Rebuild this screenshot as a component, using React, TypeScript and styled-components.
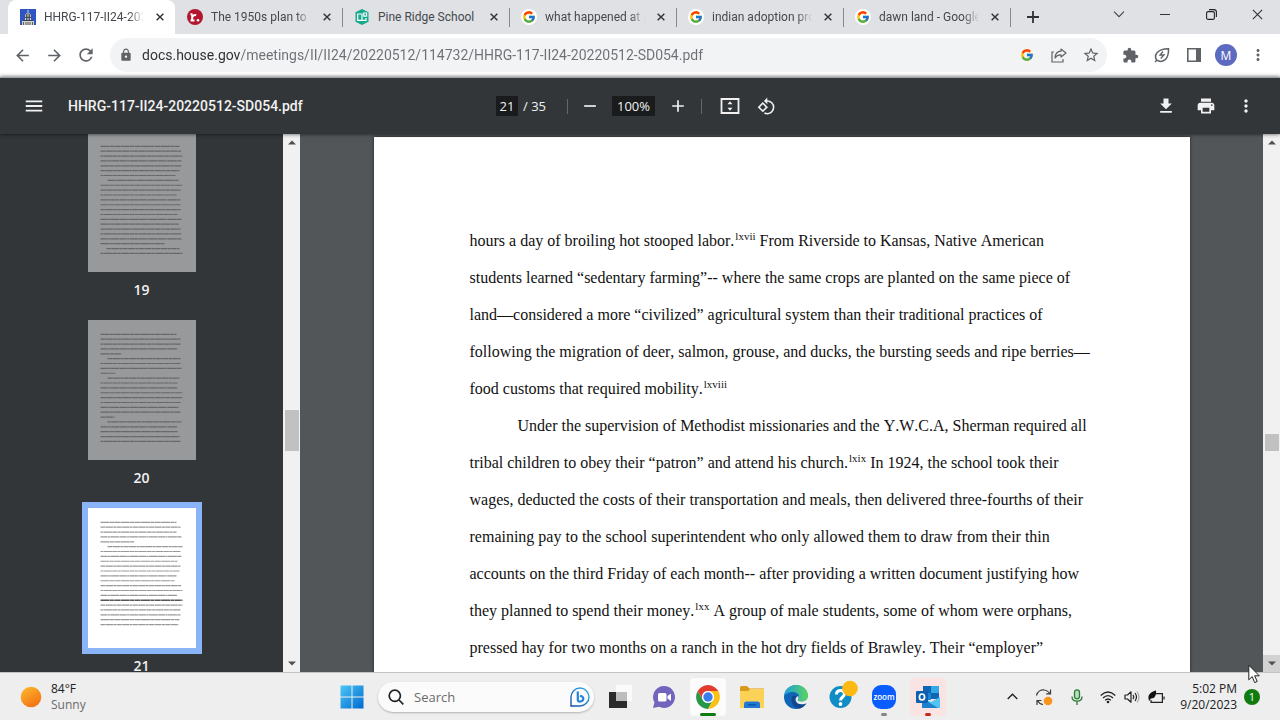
import React from "react";
import styled, { createGlobalStyle } from "styled-components";
import {
  MdAdd,
  MdArrowBack,
  MdArrowForward,
  MdExtension,
  MdFileDownload,
  MdLock,
  MdMenu,
  MdMoreVert,
  MdPrint,
  MdRefresh,
  MdRemove,
  MdRotate90DegreesCcw,
  MdStarBorder,
} from "react-icons/md";
import { FcGoogle } from "react-icons/fc";

const uiFont = `"Segoe UI", "Open Sans", "Noto Sans", sans-serif`;
const chromeFont = `"Segoe UI", Roboto, sans-serif`;

const GlobalStyle = createGlobalStyle`
  *, *::before, *::after { box-sizing: border-box; }
  body { margin: 0; font-family: ${uiFont}; font-size: 12px; color: #202124; }
  button, input { font: inherit; color: inherit; border: 0; margin: 0; padding: 0; background: none; }
  button { display: inline-flex; align-items: center; justify-content: center; cursor: pointer; }
  svg { display: block; flex: none; }
`;

const Desktop = styled.div`
  position: relative;
  display: flex;
  flex-direction: column;
  height: 100vh;
  overflow: hidden;
`;

/* ---------- Tab strip ---------- */

const TabStrip = styled.header`
  display: flex;
  align-items: stretch;
  height: 34px;
  padding-left: 8px;
  background: #dfe1e5;
`;

const Tab = styled.div<{ $active?: boolean; $divider?: boolean }>`
  position: relative;
  display: flex;
  align-items: center;
  gap: 8px;
  width: 167px;
  padding: 0 7px 0 12px;
  border-radius: 8px 8px 0 0;
  background: ${(p) => (p.$active ? "#fff" : "transparent")};
  color: #45494d;
  &::after {
    content: "";
    position: absolute;
    right: -1px;
    top: 8px;
    width: 1px;
    height: 19px;
    background: ${(p) => (p.$divider ? "#85888c" : "transparent")};
  }
`;

const TabTitle = styled.span<{ $fade?: boolean }>`
  flex: 1;
  min-width: 0;
  white-space: nowrap;
  font-family: ${chromeFont};
  line-height: 18px;
  mask-image: ${(p) => (p.$fade ? "linear-gradient(to right, #000 85%, transparent)" : "none")};
`;

const TabClose = styled.button`
  width: 16px;
  height: 16px;
`;

const FaviconDisc = styled.span`
  display: flex;
  align-items: center;
  justify-content: center;
  width: 16px;
  height: 16px;
  border-radius: 50%;
  background: #fff;
`;

const NewTab = styled.button`
  width: 28px;
  margin-left: 9px;
`;

const WindowControls = styled.div`
  display: flex;
  height: 28px;
  margin-left: auto;
`;

const WindowButton = styled.button`
  width: 46px;
`;

/* ---------- Address row ---------- */

const AddressRow = styled.nav`
  display: flex;
  align-items: center;
  height: 43px;
  padding: 0 6px 1px;
  background: #fff;
  color: #5f6368;
`;

const IconButton = styled.button<{ $width?: number }>`
  width: ${(p) => p.$width ?? 32}px;
  height: 32px;
`;

const Omnibox = styled.div`
  display: flex;
  flex: 1;
  align-items: center;
  height: 34px;
  margin: 0 7px 0 8px;
  padding-left: 9px;
  border-radius: 17px;
  background: #f1f3f4;
`;

const UrlInput = styled.input`
  flex: 1;
  min-width: 0;
  margin-left: 9px;
  font-family: ${chromeFont};
  font-size: 14px;
  line-height: 24px;
  outline: 0;
  color: transparent;
  background: linear-gradient(to right, #2b2e32 98px, #6c7075 98px);
  background-clip: text;
`;

const Avatar = styled.span`
  display: flex;
  align-items: center;
  justify-content: center;
  width: 22px;
  height: 22px;
  border-radius: 50%;
  background: #5c6bc0;
  color: #fff;
`;

/* ---------- PDF toolbar ---------- */

const PdfToolbar = styled.div`
  position: relative;
  z-index: 1;
  display: grid;
  grid-template-columns: 1fr auto 1fr;
  align-items: center;
  height: 57px;
  padding: 0 14px;
  border-top: 1px solid #9fa1a3;
  background: #323639;
  box-shadow: 0 0 4px rgba(0, 0, 0, 0.7);
  color: #f1f1f1;
`;

const ToolbarGroup = styled.div<{ $end?: boolean }>`
  display: flex;
  align-items: center;
  justify-content: ${(p) => (p.$end ? "flex-end" : "flex-start")};
`;

const FileName = styled.h1`
  margin: 0 0 0 14px;
  font-family: ${chromeFont};
  font-size: 14px;
  font-weight: 500;
  line-height: 20px;
  white-space: nowrap;
`;

const DarkField = styled.input<{ $width: number }>`
  width: ${(p) => p.$width}px;
  height: 20px;
  background: #191b1c;
  font-size: 13px;
  text-align: center;
  outline: 0;
`;

const PageTotal = styled.span`
  width: 49px;
  padding-left: 5px;
  font-size: 13px;
  line-height: 20px;
  white-space: nowrap;
`;

const Divider = styled.span<{ $gap?: number }>`
  width: 1px;
  height: 15px;
  margin-right: ${(p) => p.$gap ?? 0}px;
  background: #63676a;
`;

/* ---------- PDF body ---------- */

const PdfBody = styled.main`
  display: flex;
  flex: 1;
  min-height: 0;
  background: #525659;
`;

const Sidebar = styled.aside`
  display: flex;
  width: 300px;
  background: #323639;
`;

const ThumbList = styled.ol`
  display: flex;
  flex: 1;
  flex-direction: column;
  align-items: center;
  margin: -2px 0 0;
  padding: 0;
  overflow: hidden;
  list-style: none;
`;

const ThumbItem = styled.li`
  display: flex;
  flex: none;
  flex-direction: column;
  align-items: center;
  height: 188px;
  color: #f1f1f1;
  font-size: 14px;
  font-weight: 600;
  line-height: 20px;
`;

const ThumbPage = styled.button<{ $current?: boolean }>`
  width: 108px;
  height: 140px;
  margin-bottom: 8px;
  background: ${(p) => (p.$current ? "#fff" : "#98999b")};
  box-shadow: ${(p) => (p.$current ? "0 0 0 6px #8ab4f8" : "none")};
`;

const Scrollbar = styled.div<{ $before: number; $thumb: number; $after: number }>`
  display: grid;
  grid-template-rows: 17px ${(p) => `${p.$before}fr ${p.$thumb}px ${p.$after}fr`} 17px;
  width: 17px;
  background: #f1f1f1;
`;

const ScrollArrow = styled.button<{ $row: number; $hover?: boolean }>`
  grid-row: ${(p) => p.$row};
  background: ${(p) => (p.$hover ? "#d2d2d2" : "transparent")};
`;

const ScrollThumb = styled.div`
  grid-row: 3;
  margin: 0 1px 0 2px;
  background: #c1c1c1;
`;

const Viewer = styled.section`
  display: flex;
  flex: 1;
  justify-content: center;
  min-width: 0;
  padding-top: 3px;
  overflow: hidden;
`;

const Page = styled.article`
  flex: none;
  width: 816px;
  padding: 85px 96px 0;
  background: #fff;
  box-shadow: 0 0 3px rgba(0, 0, 0, 0.6);
  color: #111;
  font-family: "Times New Roman", "Liberation Serif", serif;
  font-size: 16px;
  font-kerning: none;
  line-height: 37px;
`;

const Paragraph = styled.p<{ $indent?: boolean }>`
  margin: 0;
  text-indent: ${(p) => (p.$indent ? 48 : 0)}px;
  white-space: nowrap;
`;

const NoteRef = styled.sup`
  padding-left: 1px;
  font-size: 11px;
  line-height: 0;
`;

/* ---------- Taskbar ---------- */

const Taskbar = styled.footer`
  display: grid;
  grid-template-columns: 1fr auto 1fr;
  align-items: center;
  height: 48px;
  padding: 0 20px;
  border-top: 1px solid #c3c4c5;
  background: #eee;
`;

const Weather = styled.button`
  justify-self: start;
  gap: 9px;
  text-align: left;
  line-height: 16px;
`;

const Muted = styled.span`
  display: block;
  color: #6b6b6b;
`;

const Apps = styled.div`
  display: flex;
  align-items: center;
`;

const AppButton = styled.button<{ $bg?: string; $mark?: string; $markWidth?: number }>`
  position: relative;
  width: 36px;
  height: 38px;
  margin: 0 4px;
  border-radius: 4px;
  background: ${(p) => p.$bg ?? "transparent"};
  &::after {
    content: "";
    position: absolute;
    bottom: 0;
    left: 50%;
    width: ${(p) => p.$markWidth ?? 6}px;
    height: 3px;
    border-radius: 2px;
    background: ${(p) => p.$mark ?? "transparent"};
    transform: translateX(-50%);
  }
`;

const SearchBox = styled.label`
  display: flex;
  align-items: center;
  gap: 10px;
  width: 216px;
  height: 30px;
  margin: 0 4px;
  padding: 0 4px 0 10px;
  border-radius: 15px;
  background: #fbfbfb;
  box-shadow: 0 1px 2px rgba(0, 0, 0, 0.25);
`;

const SearchInput = styled.input`
  flex: 1;
  min-width: 0;
  font-size: 13px;
  outline: 0;
  &::placeholder { color: #6a6a6a; opacity: 1; }
`;

const ZoomTile = styled.span`
  display: flex;
  align-items: center;
  justify-content: center;
  width: 24px;
  height: 24px;
  border-radius: 9px;
  background: #0b5cff;
  color: #fff;
  font-size: 8px;
  font-weight: 600;
`;

const Tray = styled.div`
  display: flex;
  align-items: center;
  justify-content: flex-end;
`;

const TrayButton = styled.button<{ $width: number }>`
  width: ${(p) => p.$width}px;
  height: 32px;
`;

const Clock = styled.time`
  width: 67px;
  text-align: right;
  line-height: 16px;
`;

const Notifications = styled.button`
  width: 16px;
  height: 16px;
  margin-left: 7px;
  border-radius: 50%;
  background: #107c10;
  color: #fff;
  font-size: 11px;
`;

const Pointer = styled.svg`
  position: absolute;
  right: 20px;
  bottom: 36px;
`;

/* ---------- Icons ---------- */

const CrossIcon = ({ size = 8, width = 1.8 }: { size?: number; width?: number }) => (
  <svg width={size} height={size} viewBox="0 0 10 10" stroke="#303236" strokeWidth={width}>
    <path d="M.8.8l8.4 8.4M9.2.8L.8 9.2" />
  </svg>
);

const CapitolIcon = () => (
  <svg width="16" height="16" viewBox="0 0 16 16">
    <path fill="#2f55c4" d="M0 0h16v16H0z" />
    <path fill="#d9d6c6" d="M7.5 1h1v3h-1zM5 8q0-4 3-4t3 4zM5 8.6h6V11H5zM2 12h12v4H2z" />
    <path stroke="#353a48" strokeWidth=".8" d="M6.5 5v6M8 4v7M9.5 5v6M4.5 8.3h7M3 11.5h10M3.500 13v3M6 13v3M8 13v3M10 13v3M12.500 13v3" />
  </svg>
);

const RosterIcon = () => (
  <svg width="16" height="16" viewBox="0 0 16 16">
    <circle cx="8" cy="8" r="8" fill="#b3162f" />
    <path fill="none" stroke="#fff" strokeWidth="2" d="M5.200 12V5.500M3.500 5.300h2M3.500 11.500h4M5.500 8q1-2.600 3.700-1.800" />
    <circle cx="11" cy="11.300" r="1.300" fill="#fff" />
  </svg>
);

const SchoolIcon = () => (
  <svg width="16" height="16" viewBox="0 0 16 16">
    <path fill="#17a98c" d="M8 0l6.500 3.200v9.600L8 16l-6.500-3.200V3.200z" />
    <path fill="none" stroke="#fff" strokeWidth="1.200" d="M8 5H3.700v6.300H12V9M8 4.500v7M9.800 4h2.800v3.200H9.800z" />
  </svg>
);

const ShareIcon = () => (
  <svg width="16" height="16" viewBox="0 0 16 16" fill="none" stroke="#5f6368" strokeWidth="1.200">
    <path d="M3 5H1v10h11v-3" />
    <path strokeLinejoin="round" d="M10 2l5 4-5 4V7.800Q6 7.500 4 11q.3-6.400 6-6.800z" />
  </svg>
);

const LeafIcon = () => (
  <svg width="16" height="16" viewBox="0 0 16 16" fill="none" stroke="#5f6368" strokeWidth="1.500">
    <path d="M2.800 13.200C-.2 9 2 2 14.500 1.700 15 13 8 16.500 2.800 13.200zM1 15l2-2" />
    <path strokeWidth="1.300" d="M9 4.500L6 8h4l-3.300 3.500" />
  </svg>
);

const SidePanelIcon = () => (
  <svg width="14" height="14" viewBox="0 0 14 14">
    <path fill="none" stroke="#5f6368" strokeWidth="1.600" d="M.8.8h12.400v12.400H.8z" />
    <path fill="#5f6368" d="M9 0h5v14H9z" />
  </svg>
);

const FitPageIcon = () => (
  <svg width="20" height="16" viewBox="0 0 20 16">
    <path fill="none" stroke="#f1f1f1" strokeWidth="1.800" d="M1.500 1h17v14h-17z" />
    <path fill="#f1f1f1" d="M10 3.200l2.500 3h-5zM10 12.800l2.500-3h-5z" />
  </svg>
);

const ArrowIcon = ({ down }: { down?: boolean }) => (
  <svg width="8" height="5" viewBox="0 0 8 5">
    <path fill="#505050" d={down ? "M0 .5h8L4 4.500z" : "M0 4.500h8L4 .5z"} />
  </svg>
);

const WindowsIcon = () => (
  <svg width="24" height="24" viewBox="0 0 24 24">
    <defs>
      <linearGradient id="win" x1="0" y1="0" x2="1" y2="1">
        <stop offset="0" stopColor="#4cc6f7" />
        <stop offset="1" stopColor="#0069cf" />
      </linearGradient>
    </defs>
    <path fill="url(#win)" d="M1 .5h10.500V11.500H.5V1zM12.500.5h11v11h-11zM.5 12.500h11v11H.5zM12.500 12.500h11v11h-11z" />
  </svg>
);

const BingIcon = () => (
  <svg width="20" height="20" viewBox="0 0 20 20" fill="none">
    <defs>
      <linearGradient id="bing" x1="1" y1="0" x2="0" y2="1">
        <stop offset="0" stopColor="#31b5ea" />
        <stop offset="1" stopColor="#174ba8" />
      </linearGradient>
    </defs>
    <path stroke="url(#bing)" strokeWidth="1.400" d="M1 19v-9a9 9 0 1 1 9 9z" />
    <path stroke="#2484dc" strokeWidth="2.200" strokeLinejoin="round" d="M7.800 4.500v8.500q0 1.800 2.500 1.500 3-.5 3-3 0-2-3.300-2.800" />
  </svg>
);

const TaskViewIcon = () => (
  <svg width="24" height="24" viewBox="0 0 24 24">
    <path fill="#fafafa" d="M8 0h16v16H8z" />
    <path fill="#2b2b2b" d="M1 7h18v16H1z" />
    <path fill="#bdbdbd" d="M8 7h11v9H8z" />
  </svg>
);

const ChatIcon = () => (
  <svg width="24" height="24" viewBox="0 0 24 24">
    <path fill="#7264bd" d="M12 1a11 11 0 1 1-5 20.800L1 23l1.500-5.500A11 11 0 0 1 12 1z" />
    <rect x="6" y="8" width="8.500" height="8.500" rx="1.500" fill="#fff" />
    <path fill="#fff" d="M15.500 11l3.500-2.500v7.500l-3.500-2.500z" />
  </svg>
);

const ChromeIcon = () => (
  <svg width="26" height="26" viewBox="0 0 48 48">
    <path fill="#e33b2e" d="M4.950 13A22 22 0 0 1 43.050 13H24A11 11 0 0 0 14.470 29.500z" />
    <path fill="#279847" d="M4.950 13A22 22 0 0 0 24 46L33.530 29.500A11 11 0 0 1 14.470 29.500z" />
    <path fill="#fbc116" d="M43.050 13A22 22 0 0 1 24 46L33.530 29.500A11 11 0 0 0 24 13z" />
    <circle cx="24" cy="24" r="11" fill="#fff" />
    <circle cx="24" cy="24" r="8.700" fill="#3b7ded" />
  </svg>
);

const FolderIcon = () => (
  <svg width="26" height="24" viewBox="0 0 26 24">
    <path fill="#d99a1c" d="M1 2.500Q1 1 2.500 1H8l2.500 2.500H25V8H1z" />
    <path fill="#fbd158" d="M1 6h8l2.500-2H25v19H1z" />
    <path fill="#1f78d1" d="M5 23v-4q0-2.500 2.500-2.500h11Q21 16.500 21 19v4z" />
    <path stroke="#0e58a3" strokeWidth="1.500" d="M9 19.800h8" />
  </svg>
);

const EdgeIcon = () => (
  <svg width="26" height="26" viewBox="0 0 26 26">
    <defs>
      <linearGradient id="edgeTop" x1="0" y1="0.4" x2="1" y2="0.4">
        <stop offset="0" stopColor="#1e9fdc" />
        <stop offset="1" stopColor="#5bd45f" />
      </linearGradient>
    </defs>
    <circle cx="13" cy="13" r="12" fill="#1264b6" />
    <path fill="url(#edgeTop)" d="M1 13C1 6 6.500 1 13 1s12 5 12 10.500c0 4-3 6-6.500 6-3 0-4.200-1-3.700-2 1-1 1.200-1.500 1.200-3 0-3-3-4.500-6.500-4.500C5 8 1.500 10.500 1 13z" />
    <path fill="#12478f" d="M9 13c-2 5 1.500 11 7 11.500 3-.3 6-2.500 7.500-5.500-4 2-9.500 2-11-2.500-.5-2 .5-3.500 1.500-4-2-1.500-4.200-1-5 .5z" />
    <path fill="#eee" d="M15 12c-2 1-2.800 3-2.200 4.800 1.400 4 6.500 4.400 11.700 2.200l1.500-3.500-1-2.500c-1 3-3.500 4.500-6.500 4.500-3 0-4.200-1-3.700-2 .8-1 1.200-1.900.2-3.500z" />
  </svg>
);

const HelpIcon = () => (
  <svg width="36" height="36" viewBox="0 0 36 36">
    <circle cx="18.500" cy="18" r="11" fill="#118cc4" />
    <path fill="none" stroke="#fff" strokeWidth="3" d="M14.500 15.500q0-4 4-4t4 3.500c0 3-4 3-4 6.500" />
    <circle cx="18.500" cy="25" r="1.900" fill="#fff" />
    <circle cx="28" cy="9.500" r="7.800" fill="#fdb913" />
  </svg>
);

const OutlookIcon = () => (
  <svg width="24" height="24" viewBox="0 0 24 24">
    <path fill="#1066b5" d="M7 1h16v13H7z" />
    <path fill="#32a9e7" d="M15 1h8v7h-8z" />
    <path fill="#1b86d3" d="M7 8h8v7H7z" />
    <path fill="#50c5f2" d="M6 12l9 5 9-5v11H6z" />
    <path fill="#1c80d0" d="M6 13l16 10H6z" />
    <rect x="0" y="6" width="12" height="12" rx="1" fill="#0f5fae" />
    <ellipse cx="6" cy="12" rx="2.600" ry="3" fill="none" stroke="#fff" strokeWidth="1.700" />
  </svg>
);

const SyncIcon = () => (
  <svg width="18" height="18" viewBox="0 0 18 18" fill="none" stroke="#3a3a3a" strokeWidth="1.200">
    <path d="M1.500 7.500C2.500 3.500 6 1.500 9.500 2c2.500.3 4 1.500 5.500 3.500M15.500 1.500v4.300h-4.300M8 16.500c-2-.2-4-1.500-5.200-3.500M2 17v-4.500h4.500" />
    <circle cx="13" cy="13" r="4.300" fill="#f7941d" stroke="none" />
  </svg>
);

const MicIcon = () => (
  <svg width="12" height="16" viewBox="0 0 12 16" fill="none" stroke="#2b7a35" strokeWidth="1.300">
    <rect x="3.500" y=".8" width="5" height="9" rx="2.500" fill="#b9dcbd" />
    <path d="M1 7.500q0 4.700 5 4.700t5-4.700M6 12.200V16" />
  </svg>
);

const WifiIcon = () => (
  <svg width="16" height="14" viewBox="0 0 16 14" fill="none" stroke="#222" strokeWidth="1.300">
    <path d="M.7 5.500q7.300-7 14.600 0M3 8q5-4.800 10 0M5.200 10.300q2.800-2.600 5.600 0" />
    <circle cx="8" cy="12" r="1.300" fill="#222" stroke="none" />
  </svg>
);

const SpeakerIcon = () => (
  <svg width="16" height="14" viewBox="0 0 16 14" fill="none" stroke="#222" strokeWidth="1.200">
    <path strokeLinejoin="round" d="M1 5h2.500L7 1.800v10.400L3.500 9H1z" />
    <path d="M9 4.800q1.600 2.200 0 4.400M11 3q3 4 0 8" />
    <path stroke="#aaa" d="M13 1.500q4 5.500 0 11" />
  </svg>
);

const BatteryIcon = () => (
  <svg width="17" height="14" viewBox="0 0 17 14">
    <path fill="none" stroke="#222" strokeWidth="1.200" d="M8 3.600h6.400v8.800H3V10M16 6.500v3" />
    <path fill="#111" d="M.5 8.500C0 4 3 2 8 .5 8.500 5 7 8.500 3 8.500L1 11z" />
  </svg>
);

/* ---------- Page previews ---------- */

type Row = [indent: number, width: number, bold?: boolean];

const previewRows: Record<number, Row[]> = {
  19: [
    [0, 79], [0, 81], [0, 82], [0, 81], [0, 81], [0, 79], [0, 75], [7, 71], [0, 82], [0, 80], [0, 76], [0, 80],
    [0, 80], [0, 80], [0, 77], [0, 81], [0, 78], [0, 80], [0, 81], [0, 81], [0, 64], [6, 73], [0, 82],
  ],
  20: [
    [0, 76], [0, 80], [0, 80], [0, 77], [0, 21], [7, 73], [0, 80], [0, 81], [0, 15], [7, 72], [0, 77], [0, 77],
    [0, 82], [0, 82], [0, 80], [0, 78], [0, 80], [0, 14], [7, 74], [0, 77], [0, 77], [0, 79], [0, 80],
  ],
  21: [
    [0, 76], [0, 80], [0, 76], [0, 81], [0, 34], [7, 75], [0, 80], [0, 81], [0, 77], [0, 80], [0, 79], [0, 76],
    [0, 74], [0, 81], [0, 82], [0, 77], [0, 82, true], [0, 82], [0, 80], [0, 80], [0, 79], [0, 78],
  ],
};

const dashes = ["9 .4 4 .4 6 .4", "5 .4 7 .4 3 .4", "3 .4 8 .4 5 .4", "7 .4 2 .4 9 .4"];

const PagePreview = ({ page, current }: { page: number; current?: boolean }) => (
  <svg width="108" height="140" viewBox="0 0 108 140">
    {previewRows[page].map(([indent, width, bold], i) => (
      <line
        key={i}
        x1={12.5 + indent}
        x2={12.5 + indent + width}
        y1={14.3 + i * 4.87}
        y2={14.3 + i * 4.87}
        stroke={bold ? "#555" : current ? "#999" : "#666769"}
        strokeWidth={bold ? 1.4 : 1.2}
        strokeDasharray={dashes[i % dashes.length]}
      />
    ))}
  </svg>
);

/* ---------- Content ---------- */

const GoogleFavicon = () => (
  <FaviconDisc>
    <FcGoogle size={14} />
  </FaviconDisc>
);

const tabs = [
  { title: "HHRG-117-II24-202", icon: <CapitolIcon />, fade: true },
  { title: "The 1950s plan to e", icon: <RosterIcon />, fade: true },
  { title: "Pine Ridge School", icon: <SchoolIcon /> },
  { title: "what happened at p", icon: <GoogleFavicon />, fade: true },
  { title: "indian adoption pro", icon: <GoogleFavicon />, fade: true },
  { title: "dawn land - Google", icon: <GoogleFavicon />, fade: true },
];

const VerticalScroll = ({
  before,
  thumb,
  after,
  hoverDown,
}: {
  before: number;
  thumb: number;
  after: number;
  hoverDown?: boolean;
}) => (
  <Scrollbar $before={before} $thumb={thumb} $after={after}>
    <ScrollArrow $row={1} aria-label="Scroll up">
      <ArrowIcon />
    </ScrollArrow>
    <ScrollThumb />
    <ScrollArrow $row={5} $hover={hoverDown} aria-label="Scroll down">
      <ArrowIcon down />
    </ScrollArrow>
  </Scrollbar>
);

export default function App() {
  return (
    <Desktop>
      <GlobalStyle />

      <TabStrip>
        {tabs.map((tab, i) => (
          <Tab key={tab.title} $active={i === 0} $divider={i > 0}>
            {tab.icon}
            <TabTitle $fade={tab.fade}>{tab.title}</TabTitle>
            <TabClose aria-label="Close tab">
              <CrossIcon />
            </TabClose>
          </Tab>
        ))}
        <NewTab aria-label="New tab">
          <svg width="12" height="12" viewBox="0 0 12 12" stroke="#303236" strokeWidth="1.800">
            <path d="M6 0v12M0 6h12" />
          </svg>
        </NewTab>
        <WindowControls>
          <WindowButton aria-label="Search tabs">
            <svg width="12" height="7" viewBox="0 0 12 7" fill="none" stroke="#444" strokeWidth="1.100">
              <path d="M1 .7l5 5 5-5" />
            </svg>
          </WindowButton>
          <WindowButton aria-label="Minimize">
            <svg width="10" height="1" viewBox="0 0 10 1">
              <path fill="#333" d="M0 0h10v1H0z" />
            </svg>
          </WindowButton>
          <WindowButton aria-label="Restore">
            <svg width="11" height="11" viewBox="0 0 11 11" fill="none" stroke="#222" strokeWidth="1.100">
              <rect x=".6" y="2.600" width="7.800" height="7.800" rx="1.500" />
              <path d="M3 .6h5Q10.400.6 10.400 3v5" />
            </svg>
          </WindowButton>
          <WindowButton aria-label="Close">
            <CrossIcon size={11} width={1} />
          </WindowButton>
        </WindowControls>
      </TabStrip>

      <AddressRow>
        <IconButton aria-label="Back"><MdArrowBack size={19} /></IconButton>
        <IconButton aria-label="Forward"><MdArrowForward size={19} /></IconButton>
        <IconButton aria-label="Reload"><MdRefresh size={20} /></IconButton>
        <Omnibox>
          <MdLock size={14} />
          <UrlInput
            aria-label="Address"
            defaultValue="docs.house.gov/meetings/II/II24/20220512/114732/HHRG-117-II24-20220512-SD054.pdf"
          />
          <IconButton aria-label="Search with Google"><FcGoogle size={14} /></IconButton>
          <IconButton aria-label="Share"><ShareIcon /></IconButton>
          <IconButton aria-label="Bookmark"><MdStarBorder size={18} /></IconButton>
        </Omnibox>
        <IconButton aria-label="Extensions"><MdExtension size={17} /></IconButton>
        <IconButton aria-label="Energy saver"><LeafIcon /></IconButton>
        <IconButton aria-label="Side panel"><SidePanelIcon /></IconButton>
        <IconButton aria-label="Profile"><Avatar>M</Avatar></IconButton>
        <IconButton aria-label="Browser menu"><MdMoreVert size={18} /></IconButton>
      </AddressRow>

      <PdfToolbar>
        <ToolbarGroup>
          <IconButton $width={40} aria-label="Menu"><MdMenu size={22} /></IconButton>
          <FileName>HHRG-117-II24-20220512-SD054.pdf</FileName>
        </ToolbarGroup>
        <ToolbarGroup>
          <DarkField $width={22} aria-label="Page number" defaultValue="21" />
          <PageTotal>/ 35</PageTotal>
          <Divider />
          <IconButton $width={44} aria-label="Zoom out"><MdRemove size={20} /></IconButton>
          <DarkField $width={43} aria-label="Zoom level" defaultValue="100%" />
          <IconButton $width={46} aria-label="Zoom in"><MdAdd size={20} /></IconButton>
          <Divider $gap={10} />
          <IconButton $width={36} aria-label="Fit to page"><FitPageIcon /></IconButton>
          <IconButton $width={36} aria-label="Rotate counterclockwise"><MdRotate90DegreesCcw size={19} /></IconButton>
        </ToolbarGroup>
        <ToolbarGroup $end>
          <IconButton $width={40} aria-label="Download"><MdFileDownload size={20} /></IconButton>
          <IconButton $width={40} aria-label="Print"><MdPrint size={20} /></IconButton>
          <IconButton $width={40} aria-label="More actions"><MdMoreVert size={20} /></IconButton>
        </ToolbarGroup>
      </PdfToolbar>

      <PdfBody>
        <Sidebar>
          <ThumbList>
            {[19, 20, 21].map((page) => (
              <ThumbItem key={page}>
                <ThumbPage $current={page === 21} aria-label={`Page ${page}`}>
                  <PagePreview page={page} current={page === 21} />
                </ThumbPage>
                {page}
              </ThumbItem>
            ))}
          </ThumbList>
          <VerticalScroll before={258} thumb={41} after={204} />
        </Sidebar>

        <Viewer>
          <Page>
            <Paragraph>
              hours a day of broiling hot stooped labor.<NoteRef>lxvii</NoteRef> From Riverside to Kansas, Native American<br />
              students learned “sedentary farming”-- where the same crops are planted on the same piece of<br />
              land—considered a more “civilized” agricultural system than their traditional practices of<br />
              following the migration of deer, salmon, grouse, and ducks, the bursting seeds and ripe berries—<br />
              food customs that required mobility.<NoteRef>lxviii</NoteRef>
            </Paragraph>
            <Paragraph $indent>
              Under the supervision of Methodist missionaries and the Y.W.C.A, Sherman required all<br />
              tribal children to obey their “patron” and attend his church.<NoteRef>lxix</NoteRef> In 1924, the school took their<br />
              wages, deducted the costs of their transportation and meals, then delivered three-fourths of their<br />
              remaining pay to the school superintendent who only allowed them to draw from their thin<br />
              accounts on the third Friday of each month-- after providing a written document justifying how<br />
              they planned to spend their money.<NoteRef>lxx</NoteRef> A group of male students, some of whom were orphans,<br />
              pressed hay for two months on a ranch in the hot dry fields of Brawley. Their “employer”
            </Paragraph>
          </Page>
        </Viewer>
        <VerticalScroll before={282} thumb={17} after={204} hoverDown />
      </PdfBody>

      <Taskbar>
        <Weather>
          <svg width="22" height="22" viewBox="0 0 22 22">
            <defs>
              <linearGradient id="sun" x1="0.2" y1="0" x2="0.8" y2="1">
                <stop offset="0" stopColor="#fbb62c" />
                <stop offset="1" stopColor="#f26d12" />
              </linearGradient>
            </defs>
            <circle cx="11" cy="11" r="10.300" fill="url(#sun)" />
          </svg>
          <span>
            84°F
            <Muted>Sunny</Muted>
          </span>
        </Weather>

        <Apps>
          <AppButton aria-label="Start"><WindowsIcon /></AppButton>
          <SearchBox>
            <svg width="16" height="16" viewBox="0 0 16 16" fill="none" stroke="#222" strokeWidth="1.700">
              <circle cx="6.800" cy="6.800" r="5.600" />
              <path d="M11 11l4.300 4.300" />
            </svg>
            <SearchInput type="search" aria-label="Search" placeholder="Search" />
            <BingIcon />
          </SearchBox>
          <AppButton aria-label="Task view"><TaskViewIcon /></AppButton>
          <AppButton aria-label="Chat"><ChatIcon /></AppButton>
          <AppButton aria-label="Chrome" $bg="#fbfbfb" $mark="#107c10" $markWidth={16}><ChromeIcon /></AppButton>
          <AppButton aria-label="File Explorer"><FolderIcon /></AppButton>
          <AppButton aria-label="Edge"><EdgeIcon /></AppButton>
          <AppButton aria-label="Get help"><HelpIcon /></AppButton>
          <AppButton aria-label="Zoom" $mark="#858585"><ZoomTile>zoom</ZoomTile></AppButton>
          <AppButton aria-label="Outlook" $bg="#fae3e3" $mark="#c42b1c"><OutlookIcon /></AppButton>
        </Apps>

        <Tray>
          <TrayButton $width={32} aria-label="Show hidden icons">
            <svg width="11" height="7" viewBox="0 0 11 7" fill="none" stroke="#222" strokeWidth="1.400">
              <path d="M.7 6l4.800-4.800L10.300 6" />
            </svg>
          </TrayButton>
          <TrayButton $width={32} aria-label="Updates"><SyncIcon /></TrayButton>
          <TrayButton $width={34} aria-label="Microphone"><MicIcon /></TrayButton>
          <TrayButton $width={28} aria-label="Network"><WifiIcon /></TrayButton>
          <TrayButton $width={20} aria-label="Volume"><SpeakerIcon /></TrayButton>
          <TrayButton $width={28} aria-label="Battery"><BatteryIcon /></TrayButton>
          <Clock>
            5:02 PM
            <br />
            9/20/2023
          </Clock>
          <Notifications aria-label="1 notification">1</Notifications>
        </Tray>
      </Taskbar>

      <Pointer width="12" height="20" viewBox="0 0 12 20" aria-hidden="true">
        <path fill="#fff" stroke="#222" d="M.8 1.200v14.600l3.400-3.200 2.500 6 2.500-1.100-2.500-5.700h4.600z" />
      </Pointer>
    </Desktop>
  );
}
